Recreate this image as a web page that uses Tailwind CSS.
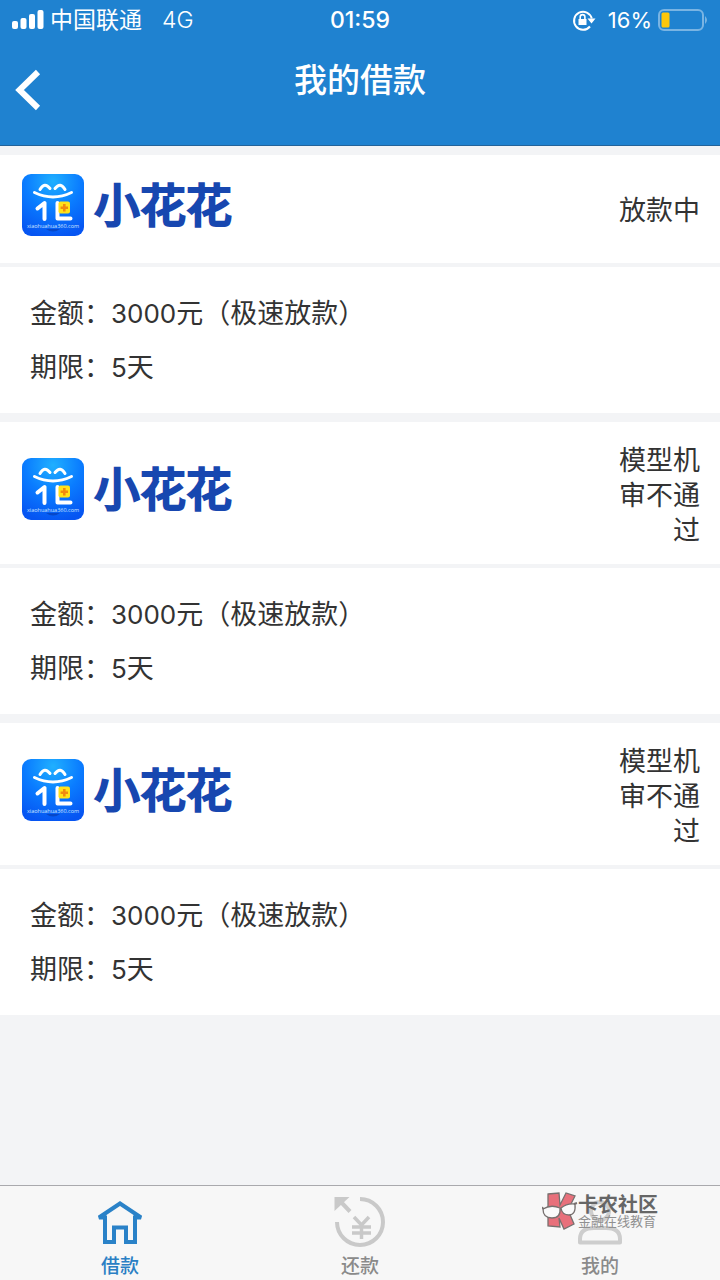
<!DOCTYPE html>
<html lang="zh-CN">
<head>
<meta charset="utf-8">
<meta name="viewport" content="width=device-width, initial-scale=1">
<title>我的借款</title>
<script src="https://cdn.jsdelivr.net/npm/@tailwindcss/browser@4"></script>
</head>
<body class="flex min-h-screen flex-col bg-[#f3f4f6] font-['Noto_Sans_CJK_SC',sans-serif] text-[#333]">

<svg class="absolute size-0" aria-hidden="true">
  <defs>
    <radialGradient id="glow" cx="50%" cy="12%" r="90%">
      <stop offset="0" stop-color="#20b0ff"/>
      <stop offset=".5" stop-color="#0a7cff"/>
      <stop offset="1" stop-color="#0655f2"/>
    </radialGradient>
    <symbol id="brand" viewBox="0 0 62 62">
      <rect width="62" height="62" rx="9" fill="url(#glow)"/>
      <path d="M24 55q7 5 14 0z" fill="#0647c8"/>
      <g fill="none" stroke="#fff" stroke-linecap="round" stroke-linejoin="round">
        <path stroke-width="3" d="M18 15.500q4.500-8 10-1M33 14.500q5.500-7 10 1"/>
        <path stroke-width="3" d="M12.500 18.500q18.500 9 37 0"/>
        <path stroke-width="4" d="M15.500 34.500l7-5.500v16M35.500 29v15.500h13"/>
      </g>
      <rect x="36.500" y="27.500" width="11.500" height="12" rx="2" fill="#ffe21a"/>
      <path fill="#f08a10" d="M41 30h2.600v2.400h2.400v2.600h-2.400v2.400h-2.600v-2.400h-2.400v-2.600h2.400z"/>
      <text x="31" y="54" text-anchor="middle" fill="#cfe6ff" font-size="5.500" font-family="Open Sans, sans-serif">xiaohuahua360.com</text>
    </symbol>
  </defs>
</svg>

<header class="border-b border-[#23639a] bg-[#1f82d0] text-white">
  <div class="grid h-10 grid-cols-3 items-center px-3 font-['Inter','Noto_Sans_CJK_SC',sans-serif] text-[22px]">
    <div class="flex items-center">
      <svg class="h-5 w-8" viewBox="0 0 32 20" fill="#fff" aria-hidden="true"><rect y="11" width="6" height="8" rx="2"/><rect x="8.500" y="8" width="6" height="11" rx="2"/><rect x="17" y="4" width="6" height="15" rx="2"/><rect x="25.500" y="0" width="6" height="19" rx="2"/></svg>
      <span class="ml-1.5 text-[23px] whitespace-nowrap">中国联通</span>
      <span class="ml-5 text-[23px] font-light">4G</span>
    </div>
    <time class="text-center text-[23px] font-medium">01:59</time>
    <div class="flex items-center justify-end">
      <svg class="h-6 w-6" viewBox="0 0 24 24" fill="none" stroke="#fff" stroke-width="2" aria-hidden="true"><path d="M18 18.500a9 9 0 1 1 1.800-8"/><path fill="#fff" stroke="none" d="M15.500 10.500h8l-4 5zM6.500 11h8v6h-8z"/><path stroke-width="1.600" d="M8.200 11V9a2.300 2.300 0 0 1 4.700 0v2"/></svg>
      <span class="ml-3">16%</span>
      <svg class="ml-1.5 h-6 w-[50px]" viewBox="0 0 50 24" aria-hidden="true"><rect x="1" y="2" width="44" height="20" rx="5" fill="none" stroke="#79b4e3" stroke-width="2"/><rect x="3.500" y="4.500" width="8" height="15" rx="1.500" fill="#fdc70a"/><path fill="#79b4e3" d="M47 8q4 4 0 8z"/></svg>
    </div>
  </div>
  <div class="grid h-[105px] grid-cols-[1fr_auto_1fr] items-start px-3.5">
    <button type="button" aria-label="返回" class="mt-7 h-11 w-8">
      <svg class="h-11 w-8" viewBox="0 0 32 44" fill="none" stroke="#fff" stroke-width="6" aria-hidden="true"><path d="M24 4L5.500 22 24 40"/></svg>
    </button>
    <h1 class="mt-3.5 text-[33px] leading-12 font-medium">我的借款</h1>
  </div>
</header>

<main class="flex flex-1 flex-col gap-[9px] pt-[9px]">
  <article>
    <div class="flex h-[108px] items-center justify-between bg-white pr-5 pl-[22px]">
      <div class="flex items-center gap-2.5 pb-2">
        <svg class="size-[62px]" aria-hidden="true"><use href="#brand"/></svg>
        <h2 class="pb-1.5 text-[46px] leading-none font-medium text-[#1747b0] [-webkit-text-stroke:2px_#1747b0]">小花花</h2>
      </div>
      <p class="w-[82px] pb-0.5 text-right text-[27px] leading-[35px]">放款中</p>
    </div>
    <dl class="mt-1 h-[146px] bg-white px-[30px] pt-[18px] text-[27px] leading-[54px]">
      <div class="flex h-[54px]"><dt>金额：</dt><dd><span class="font-['Inter'] text-[26px] leading-none">3000</span>元（极速放款）</dd></div>
      <div class="flex h-[54px]"><dt>期限：</dt><dd><span class="font-['Inter'] text-[26px] leading-none">5</span>天</dd></div>
    </dl>
  </article>
  <article>
    <div class="flex h-[142px] items-center justify-between bg-white pr-5 pl-[22px]">
      <div class="flex items-center gap-2.5 pb-2">
        <svg class="size-[62px]" aria-hidden="true"><use href="#brand"/></svg>
        <h2 class="pb-1.5 text-[46px] leading-none font-medium text-[#1747b0] [-webkit-text-stroke:2px_#1747b0]">小花花</h2>
      </div>
      <p class="w-[82px] text-right text-[27px] leading-[35px]">模型机审不通过</p>
    </div>
    <dl class="mt-1 h-[146px] bg-white px-[30px] pt-[18px] text-[27px] leading-[54px]">
      <div class="flex h-[54px]"><dt>金额：</dt><dd><span class="font-['Inter'] text-[26px] leading-none">3000</span>元（极速放款）</dd></div>
      <div class="flex h-[54px]"><dt>期限：</dt><dd><span class="font-['Inter'] text-[26px] leading-none">5</span>天</dd></div>
    </dl>
  </article>
  <article>
    <div class="flex h-[142px] items-center justify-between bg-white pr-5 pl-[22px]">
      <div class="flex items-center gap-2.5 pb-2">
        <svg class="size-[62px]" aria-hidden="true"><use href="#brand"/></svg>
        <h2 class="pb-1.5 text-[46px] leading-none font-medium text-[#1747b0] [-webkit-text-stroke:2px_#1747b0]">小花花</h2>
      </div>
      <p class="w-[82px] text-right text-[27px] leading-[35px]">模型机审不通过</p>
    </div>
    <dl class="mt-1 h-[146px] bg-white px-[30px] pt-[18px] text-[27px] leading-[54px]">
      <div class="flex h-[54px]"><dt>金额：</dt><dd><span class="font-['Inter'] text-[26px] leading-none">3000</span>元（极速放款）</dd></div>
      <div class="flex h-[54px]"><dt>期限：</dt><dd><span class="font-['Inter'] text-[26px] leading-none">5</span>天</dd></div>
    </dl>
  </article>
</main>

<nav class="relative grid h-[95px] grid-cols-3 border-t border-[#a9a9ad] bg-[#f7f7f7] text-[19px] leading-6 font-medium text-[#8a8a8a]">
  <a href="#" class="flex flex-col items-center gap-[3px] pt-2.5 text-[#2a7fc4]" aria-current="page">
    <svg class="h-[54px] w-[54px]" viewBox="0 0 54 54" fill="none" stroke="#2a82c8" stroke-width="4" aria-hidden="true"><path d="M27 7.500L6 21.500h6V46h9V31.500h12V46h9V21.500h6z" stroke-miterlimit="2.500"/></svg>
    借款
  </a>
  <a href="#" class="flex flex-col items-center gap-[3px] pt-2.5">
    <svg class="h-[54px] w-[54px]" viewBox="0 0 54 54" fill="none" stroke="#c9c9c9" stroke-width="4" aria-hidden="true"><path d="M27 3a23 23 0 1 1-23 23M8 6l9 9.500"/><path fill="#c9c9c9" stroke="none" d="M1.500 1h15l-15 14z"/><path stroke-width="3.500" d="M21 21l7.500 8 7.500-8M28.500 29v14M19 31h19M19 37h19"/></svg>
    还款
  </a>
  <a href="#" class="flex flex-col items-center gap-[3px] pt-2.5">
    <svg class="h-[54px] w-[54px]" viewBox="0 0 54 54" fill="none" stroke="#cdcdcd" stroke-width="4" aria-hidden="true"><circle cx="27" cy="15" r="9"/><path d="M7 46.500V43q0-11 14-11h12q14 0 14 11v3.500z" stroke-linejoin="round"/></svg>
    我的
  </a>
  <div class="pointer-events-none absolute top-[5px] right-[62px] flex items-start">
    <svg class="h-10 w-9" viewBox="0 0 36 40" stroke="#77706f" stroke-width="1.300" aria-hidden="true"><path fill="#e8707b" d="M6 3l11-1 1 12 6-12 9 3-7 14 6 14-10 5-5-11 1 9-12-1z"/><path fill="#fafafa" d="M1 18q8-5 17-1 1 10-8 10T1 18zM19 17q6-5 14-4 1 11-6 11t-8-7z"/><path fill="none" stroke-width="2" d="M-1 16l3 2M32 13l3-1"/></svg>
    <div>
      <p class="pt-[3px] text-[20px] leading-5 font-bold text-[#666]">卡农社区</p>
      <p class="text-[13px] leading-[14px] font-normal text-[#909090]">金融在线教育</p>
    </div>
  </div>
</nav>
</body>
</html>
